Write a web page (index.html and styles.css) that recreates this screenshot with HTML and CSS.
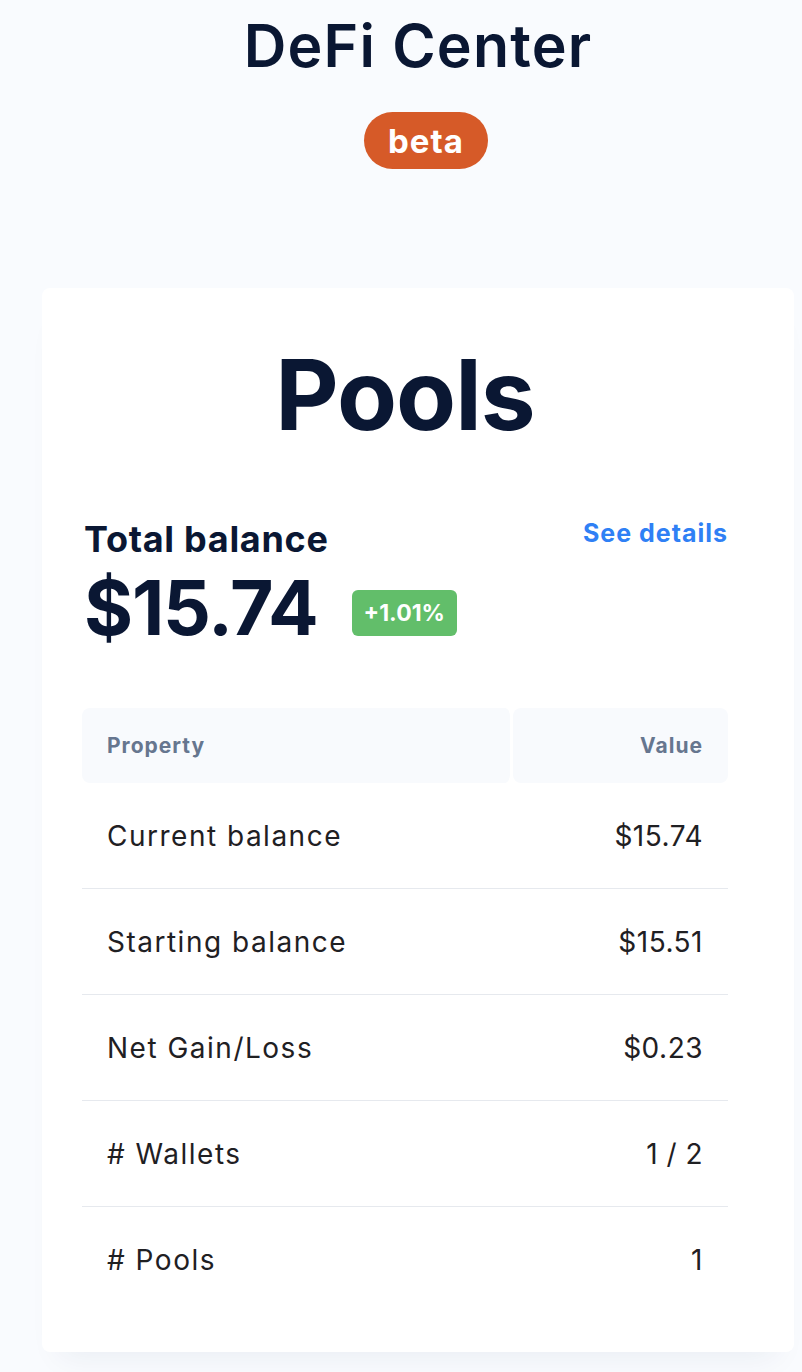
FILE: index.html
```html
<!DOCTYPE html>
<html>
<head>
<meta charset="utf-8">
<link rel="stylesheet" href="styles.css">
</head>
<body>
<div class="page">
  <header class="top">
    <h1 class="site-title">DeFi Center</h1>
    <span class="beta">beta</span>
  </header>
  <section class="card">
    <h2 class="card-title">Pools</h2>
    <div class="summary">
      <div class="summary-left">
        <div class="total-label">Total balance</div>
        <div class="total-row">
          <span class="total-value">$15.74</span>
          <span class="change">+1.01%</span>
        </div>
      </div>
      <a class="details" href="#">See details</a>
    </div>
    <table class="props">
      <thead>
        <tr><th class="th-left">Property</th><th class="th-right">Value</th></tr>
      </thead>
      <tbody>
        <tr><td>Current balance</td><td class="num">$15.74</td></tr>
        <tr><td>Starting balance</td><td class="num">$15.51</td></tr>
        <tr><td>Net Gain/Loss</td><td class="num">$0.23</td></tr>
        <tr><td># Wallets</td><td class="num">1 / 2</td></tr>
        <tr><td># Pools</td><td class="num">1</td></tr>
      </tbody>
    </table>
  </section>
</div>
</body>
</html>
```

FILE: styles.css
```css
html, body {
  margin: 0;
  padding: 0;
  background: #f9fbfe;
}
body {
  font-family: "Inter", "Liberation Sans", sans-serif;
  color: #0a1733;
}
.page {
  margin: 0 8px 0 42px;
  padding-top: 10px;
  padding-bottom: 20px;
}
.top {
  display: flex;
  flex-direction: column;
  align-items: center;
}
.site-title {
  margin: 0;
  font-size: 59px;
  line-height: 72px;
  font-weight: 600;
  letter-spacing: 1.2px;
  color: #0a1733;
}
.beta {
  margin-top: 30px;
  margin-left: 16px;
  display: inline-flex;
  align-items: center;
  justify-content: center;
  width: 124px;
  height: 57px;
  border-radius: 29px;
  background: #d65a28;
  color: #fff;
  font-weight: 700;
  font-size: 33px;
  letter-spacing: 1px;
}
.card {
  margin-top: 119px;
  background: #fff;
  border-radius: 8px;
  padding: 47px 66px 40px 40px;
  box-shadow: 0 22px 30px -18px rgba(20, 40, 90, 0.07);
}
.card-title {
  margin: 0;
  text-align: center;
  font-size: 98px;
  line-height: 120px;
  font-weight: 700;
  letter-spacing: -1px;
  color: #0a1733;
}
.summary {
  margin-top: 62px;
  display: flex;
  justify-content: space-between;
  align-items: flex-start;
  padding-left: 2px;
}
.total-label {
  font-size: 36px;
  font-weight: 700;
  line-height: 44px;
  letter-spacing: 0.7px;
}
.total-row {
  display: flex;
  align-items: center;
  gap: 34px;
  margin-top: 2px;
}
.total-value {
  font-size: 75px;
  font-weight: 700;
  line-height: 90px;
  letter-spacing: -1.2px;
}
.change {
  background: #62be6a;
  color: #fff;
  font-weight: 700;
  font-size: 23px;
  border-radius: 6px;
  padding: 0 12px;
  height: 46px;
  margin-top: 10px;
  display: inline-flex;
  align-items: center;
  letter-spacing: 0;
}
.details {
  color: #2f80f5;
  text-decoration: none;
  font-weight: 700;
  font-size: 25px;
  margin-top: 1px;
  letter-spacing: 1px;
}
.props {
  margin-top: 55px;
  width: 100%;
  border-collapse: separate;
  border-spacing: 0;
  table-layout: fixed;
}
.props th {
  background: #f8fafd;
  background-clip: padding-box;
  color: #66768f;
  font-size: 21px;
  font-weight: 700;
  height: 75px;
  padding: 0 25px;
  border-radius: 8px;
  letter-spacing: 1px;
}
.th-left {
  text-align: left;
  width: 378px;
  border-right: 3px solid #fff;
}
.th-right {
  text-align: right;
}
.props td {
  height: 105px;
  padding: 0 25px;
  font-size: 28px;
  color: #1f2023;
  border-bottom: 1px solid #e6e9ee;
  letter-spacing: 1.5px;
}
.props tr:last-child td {
  border-bottom: none;
}
.props td.num {
  text-align: right;
  letter-spacing: 0.5px;
}
```
